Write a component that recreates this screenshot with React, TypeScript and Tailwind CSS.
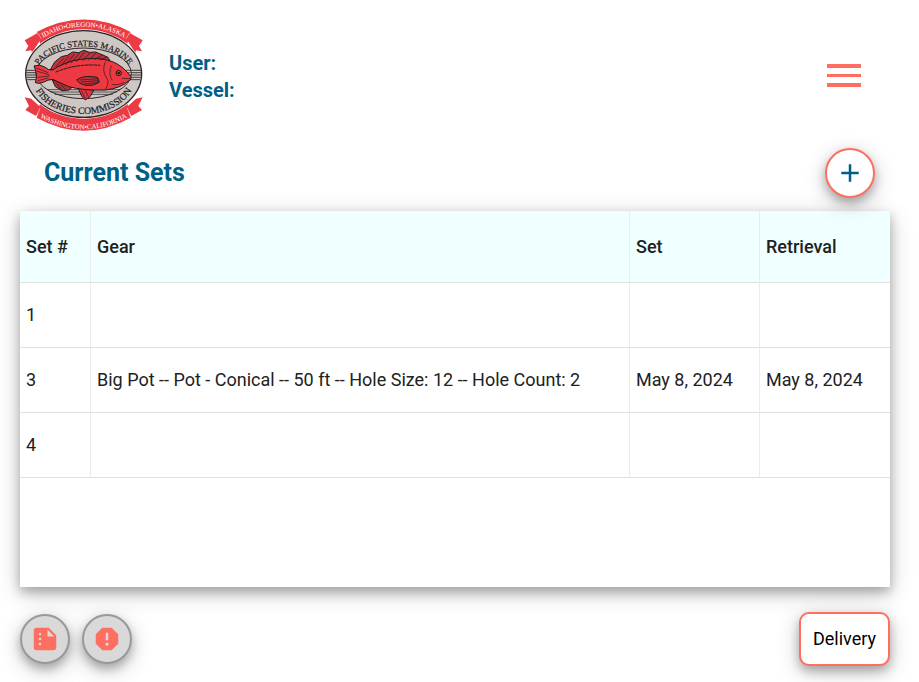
import React from "react";
import { MdAdd, MdReport, MdSummarize } from "react-icons/md";

type SetRow = { id: number; gear: string; set: string; retrieval: string };

const rows: SetRow[] = [
  { id: 1, gear: "", set: "", retrieval: "" },
  {
    id: 3,
    gear: "Big Pot -- Pot - Conical -- 50 ft -- Hole Size: 12 -- Hole Count: 2",
    set: "May 8, 2024",
    retrieval: "May 8, 2024",
  },
  { id: 4, gear: "", set: "", retrieval: "" },
];

const shadow = "shadow-[0_5px_10px_0_rgba(0,0,0,0.24),0_6px_22px_0_rgba(0,0,0,0.22)]";

function Logo() {
  return (
    <svg
      className="h-28 w-30 shrink-0"
      viewBox="9 9 360 336"
      role="img"
      aria-label="Pacific States Marine Fisheries Commission"
      fontFamily="'Liberation Serif', serif"
    >
      <defs>
        <path id="arcTop" d="M 56 72 Q 191 -8 326 72" />
        <path id="arcUpper" d="M 48 166 C 76 66 306 66 334 166" />
        <path id="arcLower" d="M 38 200 C 70 325 312 325 344 200" />
        <path id="arcBottom" d="M 46 296 Q 191 384 336 296" />
      </defs>

      {/* ribbons */}
      <g fill="#ed3b45">
        <path d="M14 73 L54 50 L62 70 L36 112 L34 103 L16 106 L25 90 Z" />
        <path d="M368 73 L328 50 L320 70 L346 112 L348 103 L366 106 L357 90 Z" />
        <path d="M14 244 L34 248 L62 274 L48 300 L16 282 L27 270 Z" />
        <path d="M368 244 L348 248 L320 274 L334 300 L366 282 L355 270 Z" />
        <path d="M50 48 Q191 -27 332 48 L318 96 Q191 4 64 96 Z" />
        <path d="M60 262 Q191 350 322 262 L332 305 Q191 383 50 305 Z" />
      </g>
      <g fill="none" stroke="#fff" strokeWidth="1.5">
        <path d="M52 49 L64 68 M330 49 L318 68 M60 276 L50 303 M322 276 L332 303" />
      </g>

      {/* seal */}
      <ellipse cx="191" cy="174" rx="178" ry="134" fill="#fff" />
      <ellipse cx="191" cy="174" rx="176" ry="132" fill="#2b2427" />
      <ellipse cx="191" cy="174" rx="172" ry="128" fill="#cfc7c3" />
      <g stroke="#2b2427" strokeWidth="2.6">
        <path d="M19 163H363M19 170H363M19 177H363M20 184H362M22 191H360" />
      </g>
      <ellipse cx="191" cy="172" rx="143" ry="76" fill="#cfc7c3" stroke="#2b2427" strokeWidth="3" />
      <path
        d="M50 163H332M50 170H332M50 177H332M50 184H332M52 191H330M82 221H300M92 228H290M104 235H278"
        stroke="#2b2427"
        strokeWidth="2.2"
      />

      {/* fish */}
      <g stroke="#211a1c" strokeWidth="3" strokeLinejoin="round">
        <path
          d="M92 160 L104 138 L124 122 L142 118 L158 108 L176 110 L192 103 L208 109 L226 108 L246 116 L264 124 L270 134 L200 148 L120 164 Z"
          fill="#c4313a"
        />
        <path d="M172 212 L196 220 L222 222 L210 242 L196 252 L186 242 Z" fill="#dd3640" />
        <path d="M96 190 L126 202 L156 214 L148 222 L126 224 L106 212 Z" fill="#b52d36" />
        <path
          d="M42 150 Q58 144 72 152 Q86 164 98 162 Q136 136 182 130 Q238 122 280 138 Q312 152 334 184 Q334 192 324 196 Q304 216 256 222 Q190 224 146 212 L98 190 Q84 190 70 199 Q56 204 46 200 Q54 176 42 150 Z"
          fill="#ee3942"
        />
        <path d="M170 192 Q190 176 232 184 L238 198 Q220 212 196 208 Q178 204 170 192 Z" fill="#c4313a" />
      </g>
      <g fill="none" stroke="#211a1c" strokeWidth="2" strokeLinecap="round">
        <path d="M256 138 Q244 164 260 186 Q270 202 256 220 M274 150 Q264 172 276 192 M332 188 L306 187 M276 206 Q298 208 312 200" />
        <path d="M50 156 L84 170 M52 166 L86 176 M54 184 L88 180 M54 194 L84 186" />
        <path d="M108 168 Q170 142 240 148" strokeWidth="3" strokeDasharray="9 4" />
        <path d="M108 152 L130 128 M122 150 L146 122 M138 146 L162 115 M154 140 L178 112 M170 136 L194 108 M188 134 L210 111 M206 132 L228 111 M224 130 L246 118 M240 130 L260 124" />
        <path d="M110 202 L124 220 M122 206 L136 220 M184 224 L196 246 M196 224 L204 240" />
        <path d="M180 192 L234 188 M184 198 L236 194 M194 204 L232 200" />
      </g>
      <circle cx="296" cy="171" r="8" fill="#ee3942" stroke="#211a1c" strokeWidth="3" />
      <circle cx="296" cy="171" r="4" fill="#211a1c" />

      <g textAnchor="middle">
        <text fontSize="21" fill="#fff">
          <textPath href="#arcTop" startOffset="50%">IDAHO•OREGON•ALASKA</textPath>
        </text>
        <text fontSize="26" fill="#211a1c" stroke="#211a1c" strokeWidth="0.6">
          <textPath href="#arcUpper" startOffset="50%">PACIFIC STATES MARINE</textPath>
        </text>
        <text fontSize="29" fill="#211a1c" stroke="#211a1c" strokeWidth="0.6">
          <textPath href="#arcLower" startOffset="50%">FISHERIES COMMISSION</textPath>
        </text>
        <text fontSize="21" fill="#fff">
          <textPath href="#arcBottom" startOffset="50%">WASHINGTON•CALIFORNIA</textPath>
        </text>
      </g>
    </svg>
  );
}

const cell = "border-b border-b-[#e0e0e0] px-[6px] text-left";
const divided = "border-r border-r-[#ebebeb]";

export default function App() {
  return (
    <main className="pt-[19px] pr-[29px] pb-4 pl-5 font-[Roboto,sans-serif] text-lg text-[#212121]">
      <header className="flex items-center">
        <div className="ml-[3px]">
          <Logo />
        </div>
        <div className="ml-[26px] pt-1 text-xl leading-[27px] font-bold text-[#005f87]">
          <p>User:</p>
          <p>Vessel:</p>
        </div>
        <button
          type="button"
          aria-label="Menu"
          className="mr-[29px] ml-auto flex w-[34px] flex-col gap-[6px]"
        >
          <span className="h-1 w-full bg-[#ff6f61]" />
          <span className="h-[3px] w-full bg-[#ff6f61]" />
          <span className="h-1 w-full bg-[#ff6f61]" />
        </button>
      </header>

      <section>
        <div className="mt-[17px] flex items-center justify-between pr-[15px] pl-6">
          <h1 className="text-[25px] font-bold text-[#005f87]">Current Sets</h1>
          <button
            type="button"
            aria-label="Add set"
            className={`flex size-[50px] items-center justify-center rounded-full border-2 border-[#ff6f61] bg-white text-[#005f87] ${shadow}`}
          >
            <MdAdd className="size-[30px]" />
          </button>
        </div>

        <div className={`mt-[13px] min-h-94 bg-white ${shadow}`}>
          <table className="w-full table-fixed border-separate border-spacing-0">
            <colgroup>
              <col className="w-[71px]" />
              <col />
              <col className="w-[130px]" />
              <col className="w-[130px]" />
            </colgroup>
            <thead>
              <tr className="h-[72px] bg-[#f0ffff]">
                <th className={`${cell} ${divided} font-medium`}>Set #</th>
                <th className={`${cell} ${divided} font-medium`}>Gear</th>
                <th className={`${cell} ${divided} font-medium`}>Set</th>
                <th className={`${cell} font-medium`}>Retrieval</th>
              </tr>
            </thead>
            <tbody>
              {rows.map((row) => (
                <tr key={row.id} className="h-[65px]">
                  <td className={`${cell} ${divided}`}>{row.id}</td>
                  <td className={`${cell} ${divided}`}>{row.gear}</td>
                  <td className={`${cell} ${divided}`}>{row.set}</td>
                  <td className={cell}>{row.retrieval}</td>
                </tr>
              ))}
            </tbody>
          </table>
        </div>
      </section>

      <footer className="mt-[25px] flex items-center justify-between">
        <div className="flex gap-3">
          <button
            type="button"
            aria-label="Summary"
            className={`flex size-[50px] items-center justify-center rounded-full border-2 border-[#999] bg-[#d9d9d9] text-[#ff6f61] ${shadow}`}
          >
            <MdSummarize className="size-[30px]" />
          </button>
          <button
            type="button"
            aria-label="Report"
            className={`flex size-[50px] items-center justify-center rounded-full border-2 border-[#999] bg-[#d9d9d9] text-[#ff6f61] ${shadow}`}
          >
            <MdReport className="size-[30px]" />
          </button>
        </div>
        <button
          type="button"
          className={`h-[54px] rounded-[10px] border-2 border-[#ff6f61] bg-white px-3 text-black ${shadow}`}
        >
          Delivery
        </button>
      </footer>
    </main>
  );
}
